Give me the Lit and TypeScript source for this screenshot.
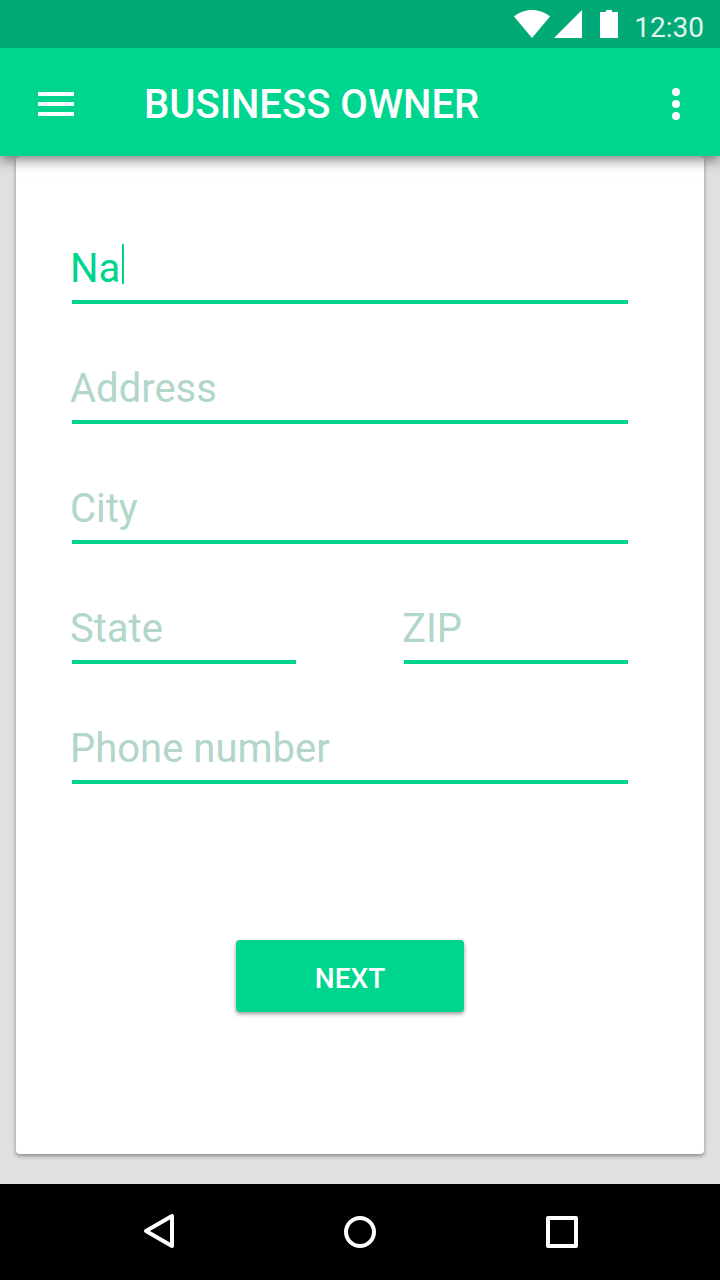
import { LitElement, html, css, nothing } from "lit";
import { customElement, property } from "lit/decorators.js";

@customElement("form-field")
class FormField extends LitElement {
  @property() label = "";
  @property() value = "";
  @property({ type: Boolean, reflect: true }) active = false;

  static styles = css`
    :host {
      display: block;
      min-width: 0;
    }
    .field {
      display: flex;
      align-items: flex-start;
      height: 60px;
      box-sizing: border-box;
      border-bottom: 4px solid #00d590;
    }
    .input {
      flex: 1;
      min-width: 0;
      height: 50px;
      box-sizing: border-box;
      margin: 0 0 0 -2px;
      padding: 0;
      border: 0;
      outline: 0;
      background: none;
      color: #00d590;
      caret-color: #00d590;
      font: 400 40px/50px Roboto, sans-serif;
    }
    .input::placeholder {
      color: #b2d6c9;
      opacity: 1;
    }
    .input.active {
      flex: none;
      field-sizing: content;
      max-width: 100%;
    }
    .caret {
      width: 2px;
      height: 40px;
      margin-left: 2px;
      background: #00d590;
    }
  `;

  render() {
    return html`
      <div class="field">
        <input
          class="input ${this.active ? "active" : ""}"
          type="text"
          aria-label=${this.label}
          placeholder=${this.label}
          .value=${this.value}
        />
        ${this.active ? html`<span class="caret"></span>` : nothing}
      </div>
    `;
  }
}

@customElement("app-root")
class AppRoot extends LitElement {
  static styles = css`
    :host {
      display: flex;
      flex-direction: column;
      min-height: 100vh;
      background: #e0e0e0;
      font-family: Roboto, sans-serif;
    }
    svg {
      display: block;
    }
    button {
      margin: 0;
      padding: 0;
      border: 0;
      background: none;
      color: #fff;
      font-family: inherit;
      cursor: pointer;
    }
    .status {
      position: relative;
      z-index: 1;
      display: flex;
      justify-content: flex-end;
      align-items: center;
      height: 48px;
      padding-right: 16px;
      background: #00a976;
      color: #fff;
    }
    .time {
      margin-left: 14px;
      padding-top: 8px;
      font-size: 28px;
      line-height: 40px;
      color: #e0f5ee;
    }
    .bar {
      position: relative;
      display: flex;
      align-items: center;
      height: 108px;
      padding: 4px 20px 0 32px;
      box-sizing: border-box;
      background: #00d590;
      color: #fff;
      box-shadow: 0 4px 12px rgba(0, 0, 0, 0.5);
    }
    .title {
      flex: 1;
      margin: 0 0 0 64px;
      padding-top: 2px;
      font-size: 40px;
      font-weight: 500;
      line-height: 48px;
    }
    .card {
      flex: 1;
      margin: 0 16px 30px;
      padding: 88px 76px 96px 56px;
      background: #fff;
      border-radius: 4px;
      box-shadow: 0 2px 4px rgba(0, 0, 0, 0.4);
    }
    .form {
      display: grid;
      grid-template-columns: 1fr 1fr;
      gap: 60px 108px;
    }
    .wide {
      grid-column: 1 / -1;
    }
    .next {
      justify-self: center;
      width: 228px;
      height: 72px;
      margin-top: 96px;
      padding-top: 4px;
      border-radius: 4px;
      background: #00d590;
      font-size: 28px;
      font-weight: 500;
      box-shadow: 0 2px 4px rgba(0, 0, 0, 0.4);
    }
    .nav {
      display: flex;
      justify-content: center;
      gap: 106px;
      height: 96px;
      background: #000;
    }
    .key {
      display: grid;
      place-items: center;
      width: 96px;
    }
  `;

  render() {
    return html`
      <div class="status">
        <svg width="106" height="48" viewBox="0 0 106 48" fill="currentColor" aria-hidden="true">
          <path d="M0 16.500C5 12.500 11 10 18 10s13 2.500 18 6.500L18 38Z" />
          <path d="M40 38 68 10V38Z" />
          <path d="M86 12h6v-2h6v2h6v26H86Z" />
        </svg>
        <span class="time">12:30</span>
      </div>
      <header class="bar">
        <button type="button" aria-label="Menu">
          <svg width="48" height="48" viewBox="0 0 48 48" fill="currentColor">
            <path d="M6 12h36v4H6zM6 22h36v4H6zM6 32h36v4H6z" />
          </svg>
        </button>
        <h1 class="title">BUSINESS OWNER</h1>
        <button type="button" aria-label="More options">
          <svg width="48" height="48" viewBox="0 0 48 48" fill="currentColor">
            <circle cx="24" cy="12" r="4" />
            <circle cx="24" cy="24" r="4" />
            <circle cx="24" cy="36" r="4" />
          </svg>
        </button>
      </header>
      <main class="card">
        <form class="form" @submit=${(e: Event) => e.preventDefault()}>
          <form-field class="wide" label="Name" value="Na" active></form-field>
          <form-field class="wide" label="Address"></form-field>
          <form-field class="wide" label="City"></form-field>
          <form-field label="State"></form-field>
          <form-field label="ZIP"></form-field>
          <form-field class="wide" label="Phone number"></form-field>
          <button class="next wide" type="submit">NEXT</button>
        </form>
      </main>
      <nav class="nav">
        <button class="key" type="button" aria-label="Back">
          <svg width="48" height="48" viewBox="0 0 48 48" fill="none" stroke="currentColor" stroke-width="4" stroke-linejoin="round">
            <path d="M12 23 38 8V38Z" />
          </svg>
        </button>
        <button class="key" type="button" aria-label="Home">
          <svg width="48" height="48" viewBox="0 0 48 48" fill="none" stroke="currentColor" stroke-width="4">
            <circle cx="24" cy="24" r="14" />
          </svg>
        </button>
        <button class="key" type="button" aria-label="Recent apps">
          <svg width="48" height="48" viewBox="0 0 48 48" fill="none" stroke="currentColor" stroke-width="4" stroke-linejoin="round">
            <path d="M10 10H38V38H10Z" />
          </svg>
        </button>
      </nav>
    `;
  }
}
